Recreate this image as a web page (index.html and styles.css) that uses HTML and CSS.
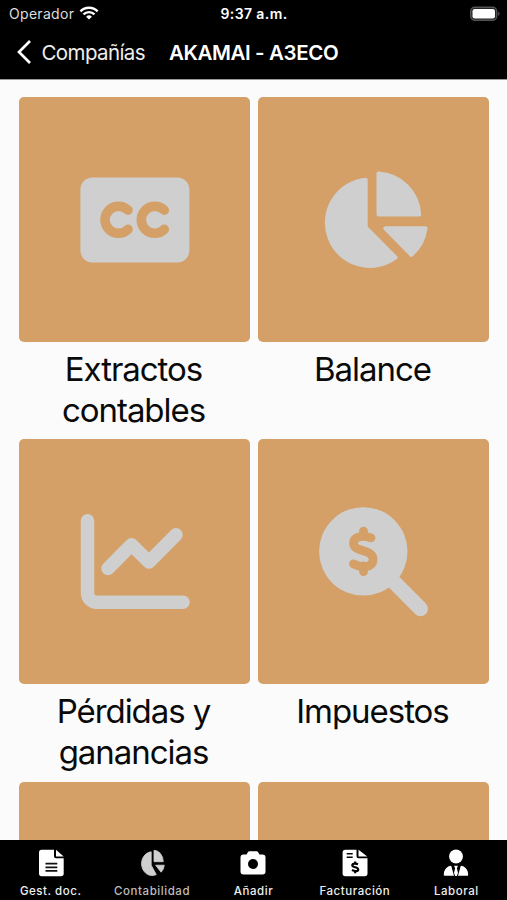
FILE: index.html
```html
<!DOCTYPE html>
<html lang="es">
<head>
<meta charset="utf-8">
<title>AKAMAI - A3ECO</title>
<link rel="stylesheet" href="styles.css">
</head>
<body>
<div class="app">
  <header class="header">
    <div class="status">
      <div class="carrier"><span>Operador</span>
        <svg width="20" height="16" viewBox="0 0 20 16" fill="none" stroke="#fff" stroke-width="2.4"><path d="M1.4 6.3a12.2 12.2 0 0 1 17.2 0M4.5 9.4a7.8 7.8 0 0 1 11 0"/><path d="M10 14.6 7.1 11.7a4.1 4.1 0 0 1 5.8 0z" fill="#fff" stroke="none"/></svg>
      </div>
      <span class="time">9:37 a.m.</span>
      <svg class="battery" width="32" height="16" viewBox="0 0 32 16"><rect x="1.7" y="1.2" width="26" height="13" rx="4" fill="#222" stroke="#555" stroke-width="1.4"/><rect x="3.5" y="3" width="22.5" height="9.5" rx="2.2" fill="#fff"/><path d="M29.3 5.5q2.5 2.2 0 4.5z" fill="#666"/></svg>
    </div>
    <nav class="navbar">
      <svg width="16" height="26" viewBox="0 0 16 26" fill="none" stroke="#fff" stroke-width="2.7"><path d="M14 2 3 13l11 11"/></svg>
      <span class="back">Compañías</span>
      <h1 class="title">AKAMAI - A3ECO</h1>
    </nav>
  </header>

  <main class="grid">
    <section class="card">
      <div class="tile">
        <svg class="icon" viewBox="0 0 130 120"><rect x="10.4" y="17.5" width="109" height="85" rx="12" fill="#cfcfcf"/><g fill="none" stroke="#d4a067" stroke-width="9.6" stroke-linecap="round"><path d="M58 50.2a13.5 13.5 0 1 0 0 19.2"/><path d="M94.3 50.2a13.5 13.5 0 1 0 0 19.2"/></g></svg>
      </div>
      <p class="label">Extractos<br>contables</p>
    </section>
    <section class="card">
      <div class="tile">
        <svg class="icon" viewBox="0 0 130 120" fill="#cfcfcf" stroke="#cfcfcf" stroke-width="4" stroke-linejoin="round"><path d="M56.7 19.7V67.3L86.6 97.5A43.2 43.2 0 1 1 56.7 19.7z"/><path d="M69.5 13.6V54.5H110.2A43 43 0 0 0 69.5 13.6z"/><path d="M76.3 68.3H116.6A43 43 0 0 1 102.4 94.8z"/></svg>
      </div>
      <p class="label">Balance</p>
    </section>
    <section class="card">
      <div class="tile">
        <svg class="icon" viewBox="0 0 130 120" fill="none" stroke="#cfcfcf" stroke-width="13.5" stroke-linecap="round" stroke-linejoin="round"><path d="M17.5 18.7V91a9.3 9.3 0 0 0 9.3 9.3H113"/><path d="M38 66.5 61.5 42.7 79 60 106 32.7"/></svg>
      </div>
      <p class="label">Pérdidas y<br>ganancias</p>
    </section>
    <section class="card">
      <div class="tile">
        <svg class="icon" viewBox="0 0 130 120" fill="none" stroke-linecap="round" stroke-linejoin="round"><path d="M82 77 111.5 106.7" stroke="#cfcfcf" stroke-width="15"/><circle cx="54.3" cy="49.4" r="44.2" fill="#cfcfcf"/><path d="M62 35.8C55 33.2 44.5 33.8 44.5 41.2C44.5 50.5 64 46.5 64 57.5C64 66.5 52 66 44.5 61.8M54.5 29.2V34M54.5 64V69.7" stroke="#d4a067" stroke-width="8.8"/></svg>
      </div>
      <p class="label">Impuestos</p>
    </section>
    <section class="card"><div class="tile"></div></section>
    <section class="card"><div class="tile"></div></section>
  </main>

  <footer class="tabs">
    <div class="tab">
      <svg width="28" height="28" viewBox="0 0 28 28"><path d="M4.7.8H17V7.3a2 2 0 0 0 2 2h7.7V24.5a2.7 2.7 0 0 1-2.7 2.7H4.7a2.7 2.7 0 0 1-2.7-2.7V3.5A2.7 2.7 0 0 1 4.7.8z" fill="#fff"/><path d="M19 .8 26.7 7.5H19z" fill="#fff"/><path d="M8.5 14.7h11.8M8.5 18.3h11.8M8.5 21.9h11.8" stroke="#111" stroke-width="1.7"/></svg>
      <span>Gest. doc.</span>
    </div>
    <div class="tab active">
      <svg width="28" height="28" viewBox="0 0 28 28" fill="#cfcfcf" stroke="#cfcfcf" stroke-width=".8" stroke-linejoin="round"><path d="M13.200 2.800V16.200L18.300 25.600A10.600 11.900 0 1 1 13.200 2.800z"/><path d="M16 1.300V12.700H25.300A9.500 11.500 0 0 0 16 1.300z"/><path d="M17.600 16.200H26.300A10 11 0 0 1 23.100 23.200z"/></svg>
      <span>Contabilidad</span>
    </div>
    <div class="tab">
      <svg width="28" height="28" viewBox="0 0 28 28"><path d="M4.500 5.500H7.500L9 2.900Q9.400 2.200 10.300 2.200H17.700Q18.600 2.200 19 2.900L20.500 5.500H23.500a3 3 0 0 1 3 3V22.500a3 3 0 0 1-3 3h-19a3 3 0 0 1-3-3V8.500a3 3 0 0 1 3-3z" fill="#fff"/><circle cx="14" cy="15" r="5" fill="#000"/></svg>
      <span>Añadir</span>
    </div>
    <div class="tab">
      <svg width="28" height="28" viewBox="0 0 28 28"><path d="M4.300.8H15.500V7.300a2 2 0 0 0 2 2h9V24.500a2.700 2.700 0 0 1-2.700 2.700H4.300a2.700 2.700 0 0 1-2.700-2.700V3.500A2.700 2.700 0 0 1 4.300.8z" fill="#fff"/><path d="M17.500.8 26.300 7.500H17.500z" fill="#fff"/><path d="M5.700 4.800h6M5.700 8.300h6" stroke="#000" stroke-width="1.600"/><path d="M17 15.200C14.800 14.200 11.300 14.300 11.300 16.300C11.300 18.900 17.200 17.500 17.200 20.400C17.200 22.700 13.300 22.300 11 21.100M14.200 12.600V14.500M14.200 22V24.200" fill="none" stroke="#000" stroke-width="2.200"/></svg>
      <span>Facturación</span>
    </div>
    <div class="tab">
      <svg width="28" height="28" viewBox="0 0 28 28" fill="#fff"><circle cx="14" cy="7.500" r="6.900"/><path d="M9.200 16.800 12 26.800H2.800Q1.600 26.800 1.800 25.500C2 20.500 4.800 17.300 9.200 16.800zM18.800 16.800 16 26.800H25.200Q26.400 26.800 26.200 25.500C26 20.500 23.200 17.300 18.800 16.800z"/><path d="M12 16.800H16L14.900 19.200 16 24 14.800 27H13.200L12 24 13.100 19.200z"/></svg>
      <span>Laboral</span>
    </div>
  </footer>
</div>
</body>
</html>
```
FILE: styles.css
```css
* { box-sizing: border-box; }
body { margin: 0; background: #fbfbfb; font-family: Inter, "Liberation Sans", sans-serif; }
.app { height: 900px; display: flex; flex-direction: column; overflow: hidden; }
.header { flex: none; height: 80px; background: #000; color: #fff; border-bottom: 1px solid #999; }
.status { height: 27px; padding: 0 6px 0 9px; display: grid; grid-template-columns: 1fr auto 1fr; align-items: center; font-size: 14px; }
.carrier { display: flex; align-items: center; gap: 5px; color: #ddd; letter-spacing: .3px; }
.carrier svg { margin-top: -2px; }
.time { font-weight: 600; letter-spacing: .4px; margin-left: -2px; }
.battery { justify-self: end; }
.navbar { height: 50px; padding-left: 16px; display: flex; align-items: center; }
.back { margin-left: 9.5px; width: 127.5px; font-size: 20.5px; letter-spacing: -.6px; color: #eee; white-space: nowrap; }
.title { margin: 0; font-size: 20.5px; font-weight: 600; letter-spacing: -.4px; white-space: nowrap; }
.grid { flex: 1; min-height: 0; overflow: hidden; padding: 17.4px 18px 0 19px; display: grid; grid-template-columns: 231px 231px; grid-auto-rows: 342.1px; column-gap: 8px; align-content: start; }
.tile { height: 244.5px; border-radius: 5px; background: #d4a067; display: flex; align-items: center; justify-content: center; }
.icon { width: 130px; height: 120px; }
.label { margin: 7px 2px 0 0; font-size: 33px; line-height: 41px; letter-spacing: -1.05px; text-align: center; color: #0a0a0a; }
.tabs { flex: none; height: 60px; background: #000; color: #eee; display: grid; grid-template-columns: repeat(5, 1fr); }
.tab { display: flex; flex-direction: column; align-items: center; padding-top: 9px; font-size: 11.5px; font-weight: 500; line-height: 14px; white-space: nowrap; }
.tab span { margin-top: 7px; letter-spacing: .55px; }
.active { color: #bdbdbd; }
```
